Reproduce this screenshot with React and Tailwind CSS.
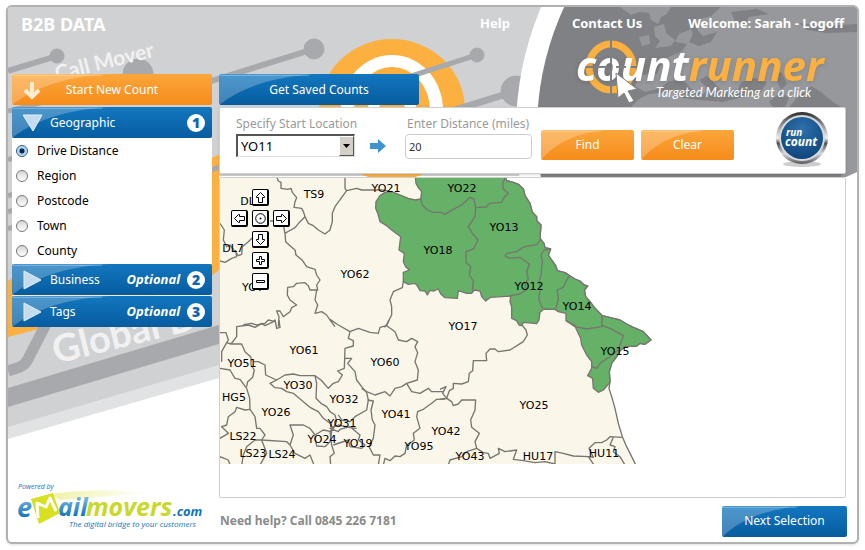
import { useState } from "react";

const filters = ["Drive Distance", "Region", "Postcode", "Town", "County"];

const mapLabels = [
  ["DL6", 251, 201], ["TS9", 314, 194], ["YO21", 386, 188], ["DL7", 233, 248], ["YO62", 355, 274],
  ["YO7", 253, 287], ["YO22", 462, 188], ["YO13", 504, 227], ["YO18", 438, 250], ["YO12", 529, 286],
  ["YO14", 577, 306], ["YO17", 463, 326], ["YO61", 304, 350], ["YO60", 385, 362], ["YO51", 242, 363],
  ["YO30", 298, 385], ["HG5", 234, 397], ["YO32", 344, 399], ["YO26", 276, 412], ["YO31", 342, 423],
  ["YO41", 396, 414], ["YO42", 446, 431], ["YO95", 419, 446], ["LS22", 243, 436], ["YO24", 322, 439],
  ["YO19", 358, 443], ["LS23", 253, 453], ["LS24", 282, 454], ["YO43", 470, 456], ["YO25", 534, 405],
  ["HU17", 538, 456], ["HU11", 604, 453], ["YO15", 615, 351],
];

function Gloss({ className = "w-24" }) {
  return (
    <svg className={`absolute inset-y-0 left-0 h-full ${className}`} viewBox="0 0 96 31" preserveAspectRatio="none" aria-hidden="true">
      <path d="M0 0H96C56 3 24 12 0 31Z" fill="#fff" fillOpacity="0.24" />
      <path d="M1 1.5H90" stroke="#fff" strokeOpacity="0.25" />
    </svg>
  );
}

function Backdrop() {
  return (
    <>
      <svg className="absolute left-0 top-0 h-[440px] w-full" aria-hidden="true">
        <g transform="translate(-8 -7)">
          <rect x="8" y="7" width="100%" height="169" fill="#d0d1d3" />
          <path d="M8 170H219V378L8 439Z" fill="#e1e2e3" />
          <path d="M8 100H219V365L8 427Z" fill="#d0d1d3" />
          <path d="M8 281L150 180L219 155V270L205 281L50 326L8 337Z" fill="#fbb040" />
          <path d="M8 388L219 325V344L8 407Z" fill="#a7a9ac" />
          <path d="M8 371L20 367Q25 365 28 359L47 322" fill="none" stroke="#a7a9ac" strokeWidth="11" />
          <g stroke="#a7a9ac" strokeWidth="5">
            <path d="M8 196L13 194M8 212L13 210M8 229L13 227M8 111L60 98M8 160L13 158M211 170L219 167" />
          </g>
          <ellipse cx="392" cy="110" rx="73" ry="71" fill="#fbb040" />
          <ellipse cx="392" cy="110" rx="51" ry="55" fill="#fff" />
          <ellipse cx="392" cy="110" rx="38" ry="43" fill="#fbb040" />
          <ellipse cx="392" cy="110" rx="24" ry="28" fill="#fff" />
          <ellipse cx="392" cy="110" rx="13" ry="15" fill="#fbb040" />
          <g stroke="#a7a9ac" fill="#a7a9ac">
            <path d="M8 71L57 56" strokeWidth="6" />
            <circle cx="57" cy="56" r="7" />
            <circle cx="138" cy="74" r="15" />
            <path d="M205 83L314 49" strokeWidth="6" />
            <circle cx="314" cy="49" r="10" />
            <path d="M380 86L477 55" strokeWidth="5" />
            <circle cx="477" cy="55" r="7" />
            <path d="M455 110L516 91" strokeWidth="7" />
            <circle cx="516" cy="91" r="15" />
          </g>
          <g fill="#f1f1f2" className="font-['Lato',sans-serif] font-bold">
            <text transform="translate(57 81) rotate(-14)" fontSize="21">Call Mover</text>
            <text transform="translate(56 364) rotate(-14)" fontSize="38">Global D</text>
          </g>
        </g>
      </svg>
      <svg className="absolute right-0 top-0 h-[170px] w-[350px]" viewBox="508 7 350 170" aria-hidden="true">
        <circle cx="830" cy="130" r="313" fill="#fff" />
        <circle cx="830" cy="130" r="292" fill="#808184" />
        <g fill="#97989b">
          <path d="M621 7H672L668 14L662 17L659 24L652 20L650 13L640 12L632 15Z" />
          <path d="M655 27L665 24L667 33L676 40L672 46L656 48L661 41L656 36Z" />
          <path d="M640 37L650 35L651 44L643 46Z" />
          <path d="M858 7H722L712 16L697 20L690 30L680 34L676 42L688 44L683 51L670 57L662 64L658 74L641 75L636 86L646 92L662 88L670 81L684 80L694 90L704 94L710 90L700 80L708 76L722 90L738 92L742 82L756 78L768 82L762 92L748 96L740 98L724 102L700 100L684 98L676 92L650 94L640 99L632 107H790L800 96L812 86L822 92L834 102L842 107V177H858Z" />
        </g>
        <g fill="#808184">
          <path d="M690 24L702 20L698 30L704 36L718 32L712 42L700 46L690 42L694 34Z" />
          <path d="M776 76L782 72L788 84L782 90Z" />
          <path d="M770 102L782 92L790 98L786 107H774Z" />
          <path d="M732 12L758 9L770 14L750 17L745 26L737 23Z" />
          <path d="M800 23L824 26L858 24V32L828 33L808 30Z" />
        </g>
        <path d="M847 177L858 172V177Z" fill="#fff" />
      </svg>
    </>
  );
}

function CountRunnerLogo() {
  return (
    <svg className="h-[69px] w-[264px] shrink-0 overflow-visible" viewBox="574 38 264 69" role="img" aria-label="countrunner">
      <ellipse cx="612" cy="67" rx="22" ry="23" fill="none" stroke="#fbb040" strokeWidth="7" />
      <path d="M612 38V98M584 67H640" stroke="#808184" strokeWidth="2" />
      <text x="577" y="81" fontSize="42" fill="#fff" className="font-['Open_Sans',sans-serif] font-bold italic drop-shadow-sm">
        count<tspan fill="#fbb040">runner</tspan>
      </text>
      <path d="M612 55V64M612 71V83M598 67H608M617 67H627" stroke="#808184" strokeWidth="2" />
      <path d="M617 73L638 89L629 91L635 101L630 103L625 93L619 98Z" fill="#fff" stroke="#808184" strokeWidth="1" />
      <text x="657" y="97" fontSize="13" fill="#fff" className="font-['Lato',sans-serif] italic">
        Targeted Marketing at a click
      </text>
    </svg>
  );
}

function EmailMoversLogo() {
  return (
    <svg className="h-[50px] w-[192px]" viewBox="14 482 192 50" role="img" aria-label="emailmovers.com">
      <defs>
        <linearGradient id="mailBlue" x1="0" y1="0" x2="0" y2="1">
          <stop offset="0.3" stopColor="#6cb1e0" />
          <stop offset="0.8" stopColor="#1174bb" />
        </linearGradient>
        <linearGradient id="swoosh">
          <stop offset="0" stopColor="#d7df23" stopOpacity="0.4" />
          <stop offset="1" stopColor="#d7df23" stopOpacity="0" />
        </linearGradient>
      </defs>
      <path d="M50 494Q100 487 150 493L60 500Z" fill="url(#swoosh)" />
      <g className="font-['Open_Sans',sans-serif] italic">
        <text x="18" y="489" fontSize="7" fill="#1174bb">Powered by</text>
        <g className="font-bold">
          <text x="17" y="517" fontSize="27" fill="url(#mailBlue)">e</text>
          <text x="58" y="516" fontSize="25" fill="url(#mailBlue)">ail</text>
          <text x="86" y="516" fontSize="25" fill="#c9d92c">movers</text>
          <text x="173" y="516" fontSize="13" fill="#1174bb">.com</text>
        </g>
        <text x="69" y="527" fontSize="8" fill="#1174bb" className="font-medium">The digital bridge to your customers</text>
      </g>
      <path d="M31 499L53 493L60 513L39 524Z" fill="#d7e021" />
      <path d="M38 518L37 503L46 507L50 498L56 511" fill="none" stroke="#fff" strokeWidth="3" strokeLinejoin="round" />
    </svg>
  );
}

function PostcodeMap() {
  return (
    <svg className="block h-[286px] w-[626px]" viewBox="220 178 626 286" role="img" aria-label="Postcode map">
      <g strokeWidth="4" strokeLinejoin="round" fill="none" stroke="#77756f">
        {/* land, then the selected districts */}
        <g transform="translate(440 175) scale(0.33333)">
          <path
            fill="#faf6ea"
            d="M-670 -5H192L200 17 220 22 235 28 250 42 255 62 270 85 277 112 290 125 290 137 303 150 300 190 312 205 315 218 332 222 325 240 337 258 347 272 352 287 375 293 388 302 405 312 420 318 432 330 443 333 433 345 437 365 450 380 465 400 487 422 520 430 540 435 560 447 580 457 610 470 633 495 615 508 600 505 590 513 555 515 540 527 530 545 515 565 508 590 510 620 507 640 515 665 525 700 535 745 547 785 560 815 590 875H-670Z"
          />
          <path
            fill="#65b167"
            d="M-75 -5L-72 25 -65 38 -55 50 -58 72 -75 75 -95 70 -115 62 -145 50 -165 52 -180 62 -192 80 -193 100 -185 120 -180 140 -160 152 -145 165 -118 185 -123 225 -107 235 -110 260 -103 275 -92 285 -110 292 -110 320 -95 328 -75 325 -67 334 -60 347 -45 348 -38 360 -30 346 -18 348 -5 342 3 358 15 368 52 370 55 347 80 355 95 355 103 345 120 348 125 365 137 378 152 367 212 363 210 380 215 395 215 430 230 437 237 450 245 452 250 442 290 446 297 435 300 412 312 402 345 403 355 410 378 415 378 437 405 452 410 465 422 490 425 510 440 540 455 560 455 580 443 602 458 610 460 640 475 652 490 645 510 622 508 590 515 565 530 545 540 527 555 515 590 513 600 505 615 508 633 495 610 470 580 457 560 447 540 435 520 430 487 422 465 400 450 380 437 365 433 345 443 333 432 330 420 318 405 312 388 302 375 293 352 287 347 272 337 258 325 240 332 222 315 218 312 205 300 190 303 150 290 137 290 125 277 112 270 85 255 62 250 42 235 28 220 22 200 17 192 -5Z"
          />
          <path d="M-58 72L-53 90 -38 105 -20 112 5 112 15 118 40 103 65 90 90 67 102 72 107 98 138 96 150 85 185 82 190 70 205 55 190 42 188 25 195 10" />
          <path d="M107 98L105 125 85 155 97 175 114 195 100 222 78 230 78 262 92 275 88 300 100 318 97 347" />
          <path d="M300 195L292 208 250 216 230 230 200 235 195 243 210 250 240 247 268 267 260 290 265 312 255 325 258 345 240 357 212 362" />
          <path d="M330 222L312 225 303 240 307 258 303 300 298 318 300 345 296 372 307 400" />
          <path d="M388 302L380 315 370 337 352 345 355 372 347 403M378 437L405 455 440 462 485 455 487 422M487 452L510 460 550 482 540 510 535 525 505 548 480 565 470 580 455 575" />
        </g>
        <g transform="translate(215 175) scale(0.33333)">
          <path d="M185 5L190 18 198 22 198 40 218 43 228 40 232 52 245 68 240 80 237 97 260 100 266 112 270 125 280 145 295 152 310 165 330 177 345 165 352 140 352 115 360 95 378 70 395 47 390 40V5M395 47L425 40 440 45 500 45 530 50" />
          <path d="M270 125L255 140 240 158 222 168 210 175 205 150 190 138H165M210 175L212 200 225 212 240 225 243 240 262 256 275 275 300 283 305 300 315 315 305 330 308 345 285 345 280 332 270 323 245 325 235 335 218 337 217 360 225 375 245 390 230 398 225 410 205 425 195 408 185 408 192 425 190 455" />
          <path d="M305 345L300 375 308 390 300 415 320 410 335 420 345 435 360 455M15 145L28 165 25 195 35 215 45 210 60 230 70 242 80 238 82 215 100 200 115 185M15 258L30 262 50 250 65 245 62 225" />
          <path d="M565 320L562 338 535 350 525 375 530 395 530 420 515 449 508 457M85 449L110 445 125 450 150 445 160 435 180 440" />
        </g>
        <g transform="translate(215 320) scale(0.33333)">
          <path d="M15 38H33L40 60 35 68 48 72 65 50 65 20 100 15 120 22 140 10 150 17 170 8 180 0 185 25 195 22 192 0M48 72L80 72 90 95 108 112 108 135 118 150 113 172 98 185 95 200" />
          <path d="M35 68L20 95 20 125M15 145L45 150 60 175 75 178 95 205 104 235 105 268M115 125H130L150 135 152 165 185 180 210 165 235 162 255 167 300 167 318 180 340 205 355 190 370 185 382 165 368 153 388 145 390 85 415 78 415 62 400 55 405 35" />
          <path d="M345 -2L370 15 405 35 430 25 465 37 490 40 495 22 515 17 540 35 550 60 575 65 590 55 608 65 600 80 608 98 600 125 610 150 607 180 575 190 560 200 540 205 525 228 510 215 480 225 455 215 440 205M515 17L522 0" />
          <path d="M390 115L410 115 398 130 420 155 425 180 440 200 455 218 460 240 455 270 420 290 405 305 380 300 370 285M185 180L165 190 180 203 200 205 215 215 235 220 265 245 285 262 310 275 325 295 345 310 355 325M300 167L305 190 303 235 318 250 335 260 345 275 360 285 365 305 355 325" />
          <path d="M458 240L475 243 468 270 472 300 480 315 475 355 462 380 475 405 495 405 490 435M575 190L590 215 615 220 640 205 650 215 685 215 M690 237L665 238 650 250 625 268 608 275 605 290 615 325 595 340 598 360 575 375 570 400 555 410 540 408 525 422 510 415 505 435" />
          <path d="M105 268L90 270 65 262 60 275 40 290 35 315 20 320 40 340 15 355M105 268L120 290 125 325 135 325 150 345 140 360 215 365 225 375 240 400 270 415 285 405 297 435M225 375L235 345 225 315 265 315 285 325 300 345 325 330 350 335 345 365 330 380 305 378 300 350" />
          <path d="M355 325L345 335 350 375 358 400 345 410 347 435M355 375L400 360 405 380 440 385 450 375 430 360 435 345 405 320 375 328 370 335 345 325 370 315 400 322 425 325M15 410L40 420 45 435M80 435L85 405 95 380 120 360 140 360 155 400 135 435" />
        </g>
        <g transform="translate(440 320) scale(0.33333)">
          <path d="M245 14L258 30 262 45 250 65 210 90 175 95 165 87 150 87 138 100 140 122 100 122 98 152 88 160 85 185 65 192 40 190 40 205 28 212 20 235 8 220 18 200 0 208M0 238L20 235 35 245 40 257 55 252 65 240 107 240 105 270 92 300 95 322 118 340 105 365 110 385 130 398 145 400 150 415 178 400 175 385 195 395 230 390 220 418 250 422 285 428 315 425 345 432 345 395 370 400 400 408 445 410 460 412 447 385 465 368 485 368 500 360 510 350 547 352" />
          <path d="M110 385L80 395 65 410 30 420 25 435M520 352L510 375 525 380 520 395 540 410 555 435M445 410L462 435" />
        </g>
      </g>
      <g fontSize="11" fill="#000" textAnchor="middle" className="font-['DejaVu_Sans',sans-serif]">
        {mapLabels.map(([code, x, y]) => (
          <text key={code} x={x} y={y + 4}>{code}</text>
        ))}
      </g>
    </svg>
  );
}

const arrow = "M5.5 0.5L9.5 4.5V5.5H7.5V10.5H3.5V5.5H1.5V4.5Z";

function MapButton({ label, className, children }) {
  return (
    <button
      aria-label={label}
      className={`flex size-[17px] items-center justify-center rounded-xs border border-r-2 border-b-2 border-black bg-white ${className}`}
    >
      <svg className="shrink-0" width="11" height="11" viewBox="0 0 11 11" fill="none" stroke="#000">
        {children}
      </svg>
    </button>
  );
}

function MapControls() {
  return (
    <div className="absolute left-[11px] top-[11px] grid grid-cols-3 gap-1">
      <MapButton label="Pan up" className="col-start-2"><path d={arrow} /></MapButton>
      <MapButton label="Pan left" className="col-start-1 row-start-2"><path d={arrow} transform="rotate(-90 5.5 5.5)" /></MapButton>
      <MapButton label="Centre" className="col-start-2 row-start-2">
        <circle cx="5.5" cy="5.5" r="4.8" />
        <circle cx="5.5" cy="5.5" r="1" fill="#000" stroke="none" />
      </MapButton>
      <MapButton label="Pan right" className="col-start-3 row-start-2"><path d={arrow} transform="rotate(90 5.5 5.5)" /></MapButton>
      <MapButton label="Pan down" className="col-start-2 row-start-3"><path d={arrow} transform="rotate(180 5.5 5.5)" /></MapButton>
      <MapButton label="Zoom in" className="col-start-2 row-start-4">
        <path d="M4.5 1.5H6.5V4.5H9.5V6.5H6.5V9.5H4.5V6.5H1.5V4.5H4.5Z" />
      </MapButton>
      <MapButton label="Zoom out" className="col-start-2 row-start-5"><path d="M1.5 4.5H9.5V6.5H1.5Z" /></MapButton>
    </div>
  );
}

function SectionHeader({ title, number, open, optional }) {
  return (
    <button
      aria-expanded={open}
      className="relative flex h-[31px] w-full items-center rounded-xs bg-linear-to-b from-[#1377bf] to-[#075c9f] pl-[11px] pr-[7px] text-xs text-white"
    >
      <Gloss />
      <svg className="relative h-5 w-5" viewBox="0 0 20 20" aria-hidden="true">
        <path d={open ? "M0 2H19L10 18Z" : "M1 1L18 10L1 19Z"} fill="#c5dcee" stroke="#e4f0f8" />
      </svg>
      <span className="relative ml-[7px]">{title}</span>
      {optional && <span className="ml-auto font-['Open_Sans',sans-serif] text-[13px] font-bold italic">Optional</span>}
      <span
        className={`${optional ? "ml-[7px]" : "ml-auto"} flex size-[18px] items-center justify-center rounded-full bg-white font-['Open_Sans',sans-serif] text-sm font-extrabold text-[#0b66ab]`}
      >
        {number}
      </span>
    </button>
  );
}

function OrangeButton({ children }) {
  return (
    <button className="relative h-[30px] w-[93px] rounded-xs bg-linear-to-b from-[#fba63a] to-[#f68b18] text-xs text-white">
      <Gloss className="w-16" />
      <span className="relative">{children}</span>
    </button>
  );
}

function RunCount() {
  return (
    <button aria-label="run count" className="h-[60px] w-[54px]">
      <svg viewBox="775 109 54 60" className="h-full w-full">
        <defs>
          <linearGradient id="chrome" x1="0" y1="0" x2="0" y2="1">
            <stop offset="0" stopColor="#2b2b2d" />
            <stop offset="0.25" stopColor="#8f9194" />
            <stop offset="0.5" stopColor="#f2f2f2" />
            <stop offset="0.6" stopColor="#4b4c4e" />
            <stop offset="0.8" stopColor="#d8d9da" />
            <stop offset="1" stopColor="#55565a" />
          </linearGradient>
          <radialGradient id="runBlue" cx="0.5" cy="0.3" r="0.8">
            <stop offset="0" stopColor="#2e71ac" />
            <stop offset="1" stopColor="#0b3f75" />
          </radialGradient>
        </defs>
        <ellipse cx="802" cy="163" rx="19" ry="3" fill="#000" fillOpacity="0.2" />
        <circle cx="802" cy="137" r="26" fill="url(#chrome)" />
        <circle cx="802" cy="137" r="23" fill="#d7dadd" />
        <circle cx="802" cy="137" r="21" fill="url(#runBlue)" />
        <g fill="#fff" className="font-['Open_Sans',sans-serif] font-bold italic">
          <text x="786" y="135" fontSize="10">run</text>
          <text x="785" y="145" fontSize="12">count</text>
        </g>
      </svg>
    </button>
  );
}

export default function App() {
  const [filter, setFilter] = useState("Drive Distance");
  const [distance, setDistance] = useState("20");

  return (
    <div className="flex min-h-screen bg-white px-[6px] pt-[5px] pb-[6px] font-['Noto_Sans',sans-serif] text-xs">
      <div className="relative flex flex-1 flex-col overflow-hidden rounded-md border-2 border-[#b1b1b1] bg-white shadow-sm">
        <Backdrop />

        <header className="relative flex h-[31px] items-center justify-between pl-[13px] pr-[13px] text-white">
          <h1 className="pt-[2px] text-lg font-bold">B2B DATA</h1>
          <nav className="flex gap-[46px] pt-[2px] text-[13px] font-bold">
            <a href="#help" className="mr-4">Help</a>
            <a href="#contact">Contact Us</a>
            <a href="#logoff">Welcome: Sarah - Logoff</a>
          </nav>
        </header>

        <main className="relative flex flex-1 gap-[7px] pl-1 pr-[11px]">
          <aside className="flex w-[200px] shrink-0 flex-col pt-9">
            <button className="relative h-[31px] rounded-xs bg-linear-to-b from-[#fba63a] to-[#f68b18] text-xs text-white">
              <Gloss />
              <svg className="absolute left-[10px] top-[6px]" width="20" height="20" viewBox="0 0 20 20" fill="none" aria-hidden="true">
                <path d="M10 2V16M3 10L10 17L17 10" stroke="#fdeccf" strokeWidth="4" />
              </svg>
              <span className="relative">Start New Count</span>
            </button>

            <div className="mt-[2px] flex flex-col">
              <SectionHeader title="Geographic" number="1" open />
              <div className="bg-white pb-px">
                {filters.map((name) => (
                  <label key={name} className="flex h-[25px] items-center gap-[9px] pl-1">
                    <input
                      type="radio"
                      name="filter"
                      checked={filter === name}
                      onChange={() => setFilter(name)}
                      className="size-3 appearance-none rounded-full border border-[#777] bg-linear-to-b from-[#d5d5d5] to-white checked:border-[#33587e] checked:bg-[radial-gradient(circle,#0d2742_30%,#8fc2ea_40%,#d3ecfb_75%)]"
                    />
                    {name}
                  </label>
                ))}
              </div>
              <SectionHeader title="Business" number="2" optional />
              <div className="h-px bg-white/70" />
              <SectionHeader title="Tags" number="3" optional />
            </div>

            <div className="mt-auto pb-[10px] pl-[2px]">
              <EmailMoversLogo />
            </div>
          </aside>

          <div className="flex min-w-0 flex-1 flex-col">
            <div className="flex items-end justify-between pr-[9px]">
              <button className="relative mb-[2px] h-[31px] w-[200px] rounded-xs bg-linear-to-b from-[#1377bf] to-[#075c9f] text-xs text-white">
                <Gloss />
                <span className="relative">Get Saved Counts</span>
              </button>
              <CountRunnerLogo />
            </div>

            <form
              className="flex h-[67px] shrink-0 items-start rounded-xs border border-[#cfcfcf] bg-white px-4 shadow-sm"
              onSubmit={(e) => e.preventDefault()}
            >
              <div className="w-[119px] pt-2">
                <label htmlFor="start" className="block h-[18px] whitespace-nowrap text-[#9a9a9a]">Specify Start Location</label>
                <div className="relative">
                  <select
                    id="start"
                    className="block h-[23px] w-full appearance-none border-2 border-r border-b border-[#555] border-r-[#ddd] border-b-[#ddd] bg-white pl-[3px] text-[13px] leading-none text-black"
                  >
                    <option>YO11</option>
                  </select>
                  <span className="pointer-events-none absolute top-[2px] right-px flex h-5 w-[15px] items-center justify-center border border-white border-r-[#555] border-b-[#555] bg-[#d4d0c8]">
                    <svg width="7" height="4" viewBox="0 0 7 4"><path d="M0 0H7L3.5 4Z" /></svg>
                  </span>
                </div>
              </div>
              <svg className="mt-[30px] ml-[14px] shrink-0" width="18" height="16" viewBox="0 0 18 16" aria-hidden="true">
                <path d="M1 5H9V1L17 8L9 15V11H1Z" fill="#3f93cf" />
              </svg>
              <div className="ml-[18px] pt-2">
                <label htmlFor="distance" className="block h-[18px] pl-[2px] text-[#9a9a9a]">Enter Distance (miles)</label>
                <input
                  id="distance"
                  value={distance}
                  onChange={(e) => setDistance(e.target.value)}
                  className="block h-[25px] w-[127px] rounded-sm border border-[#ccc] bg-white px-[3px] text-[11px] text-[#333]"
                />
              </div>
              <div className="ml-[9px] flex gap-[7px] pt-[22px]">
                <OrangeButton>Find</OrangeButton>
                <OrangeButton>Clear</OrangeButton>
              </div>
              <div className="ml-auto pt-[2px]">
                <RunCount />
              </div>
            </form>

            <section className="relative mt-[3px] flex-1 overflow-hidden rounded-xs border border-[#cfcfcf] bg-white">
              <PostcodeMap />
              <MapControls />
            </section>

            <footer className="-mr-px flex h-11 shrink-0 items-center justify-between pt-[2px]">
              <p className="pl-px font-bold text-[#8a8a8a]">Need help? Call 0845 226 7181</p>
              <button className="relative h-[31px] w-[125px] rounded-xs bg-linear-to-b from-[#1377bf] to-[#075c9f] text-xs text-white">
                <Gloss className="w-20" />
                <span className="relative">Next Selection</span>
              </button>
            </footer>
          </div>
        </main>
      </div>
    </div>
  );
}
